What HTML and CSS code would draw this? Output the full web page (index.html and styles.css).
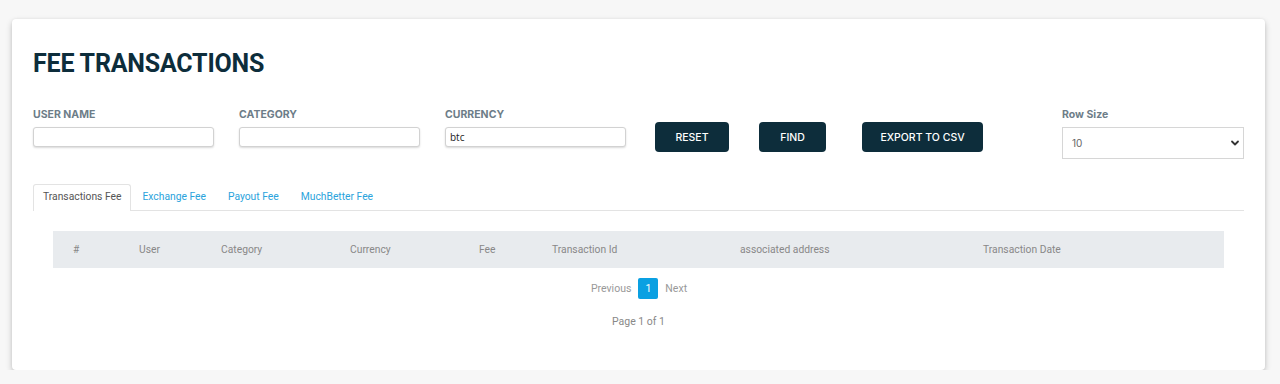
FILE: index.html
```html
<!DOCTYPE html>
<html lang="en">
<head>
    <meta charset="UTF-8">
    <meta name="viewport" content="width=device-width, initial-scale=1.0">
    <title>Fee Transactions</title>
    <link rel="stylesheet" href="styles.css">
</head>
<body>
    <div class="card">
        <h1 class="title">FEE TRANSACTIONS</h1>

        <div class="filters">
            <div class="field">
                <label for="userName">USER NAME</label>
                <input type="text" id="userName">
            </div>
            <div class="field">
                <label for="category">CATEGORY</label>
                <input type="text" id="category">
            </div>
            <div class="field">
                <label for="currency">CURRENCY</label>
                <input type="text" id="currency" value="btc">
            </div>
            <div class="actions">
                <button class="btn btn-reset">RESET</button>
                <button class="btn btn-find">FIND</button>
                <button class="btn btn-export">EXPORT TO CSV</button>
            </div>
            <div class="field row-size">
                <label for="rowSize">Row Size</label>
                <div class="select-wrap">
                    <select id="rowSize">
                        <option>10</option>
                        <option>25</option>
                        <option>50</option>
                    </select>
                    <svg class="chevron" width="10" height="10" viewBox="0 0 10 10">
                        <path d="M2 3.5 L5 6.5 L8 3.5" fill="none" stroke="#333" stroke-width="1.8" stroke-linecap="round" stroke-linejoin="round"/>
                    </svg>
                </div>
            </div>
        </div>

        <ul class="tabs">
            <li class="tab active">Transactions Fee</li>
            <li class="tab">Exchange Fee</li>
            <li class="tab">Payout Fee</li>
            <li class="tab">MuchBetter Fee</li>
        </ul>

        <div class="table-wrap">
            <table class="fee-table">
                <colgroup>
                    <col style="width: 66px">
                    <col style="width: 82px">
                    <col style="width: 129px">
                    <col style="width: 129px">
                    <col style="width: 73px">
                    <col style="width: 188px">
                    <col style="width: 243px">
                    <col>
                </colgroup>
                <thead>
                    <tr>
                        <th>#</th>
                        <th>User</th>
                        <th>Category</th>
                        <th>Currency</th>
                        <th>Fee</th>
                        <th>Transaction Id</th>
                        <th>associated address</th>
                        <th>Transaction Date</th>
                    </tr>
                </thead>
                <tbody></tbody>
            </table>

            <div class="pagination">
                <span class="page-link">Previous</span>
                <span class="page-num">1</span>
                <span class="page-link">Next</span>
            </div>
            <div class="page-info">Page 1 of 1</div>
        </div>
    </div>
</body>
</html>
```

FILE: styles.css
```css
body {
    margin: 0;
    background: #f7f7f7;
    font-family: Roboto, "Liberation Sans", sans-serif;
}
.card {
    margin: 19px 15px 0 12px;
    height: 351px;
    box-sizing: border-box;
    padding: 30px 21px 0 21px;
    background: #fff;
    border-radius: 4px;
    box-shadow: 0 3px 6px rgba(0, 0, 0, 0.22), 0 0 3px rgba(0, 0, 0, 0.06);
}
.title {
    margin: 0;
    font-size: 25px;
    line-height: 30px;
    font-weight: 700;
    color: #0d2d3b;
    letter-spacing: -0.2px;
}
.filters {
    display: flex;
    align-items: flex-start;
    margin-top: 29px;
}
.field {
    display: flex;
    flex-direction: column;
    width: 181px;
    margin-right: 25px;
}
.field label {
    font-family: Inter, "Open Sans", sans-serif;
    font-size: 10.5px;
    font-weight: 700;
    line-height: 14px;
    color: #6d7d88;
    margin-bottom: 5px;
}
.field input {
    height: 20px;
    box-sizing: border-box;
    border: 1px solid #d2d2d2;
    border-radius: 3px;
    box-shadow: 0 1px 2px rgba(0, 0, 0, 0.15);
    padding: 0 4px;
    font-family: "Open Sans", sans-serif;
    font-size: 10px;
    color: #222;
    outline: none;
}
.actions {
    display: flex;
    margin-top: 14px;
    margin-left: 4px;
}
.btn {
    height: 30px;
    border: none;
    border-radius: 4px;
    background: #0d2d3b;
    color: #fff;
    font-family: Inter, "Open Sans", sans-serif;
    font-size: 10.5px;
    font-weight: 500;
    padding: 0;
}
.btn-reset {
    width: 74px;
}
.btn-find {
    width: 67px;
    margin-left: 30px;
}
.btn-export {
    width: 121px;
    margin-left: 36px;
}
.row-size {
    margin-left: auto;
    margin-right: 0;
    width: 182px;
}
.select-wrap {
    position: relative;
}
.select-wrap select {
    width: 100%;
    height: 32px;
    appearance: none;
    -webkit-appearance: none;
    border: 1px solid #d6d6d6;
    border-radius: 0;
    background: #fff;
    padding: 0 9px;
    font-family: Inter, "Open Sans", sans-serif;
    font-size: 10px;
    color: #666;
    outline: none;
}
.chevron {
    position: absolute;
    right: 4px;
    top: 11px;
    pointer-events: none;
}
.tabs {
    list-style: none;
    margin: 25px 0 0 0;
    padding: 0;
    display: flex;
    border-bottom: 1px solid #e3e3e3;
    height: 26px;
}
.tab {
    font-size: 10.3px;
    line-height: 24px;
    padding: 0 10px;
    color: #2aa3dc;
    border: 1px solid transparent;
    border-bottom: none;
    border-radius: 3px 3px 0 0;
}
.tab.active {
    color: #555;
    border-color: #e3e3e3;
    background: #fff;
    height: 26px;
    padding: 0 9px;
}
.table-wrap {
    padding: 0 20px;
}
.fee-table {
    width: 100%;
    margin-top: 20px;
    border-collapse: collapse;
    table-layout: fixed;
}
.fee-table th {
    background: #e8ebee;
    height: 37px;
    padding: 0 0 0 20px;
    text-align: left;
    font-size: 10.3px;
    font-weight: 400;
    color: #888;
}
.pagination {
    display: flex;
    justify-content: center;
    align-items: center;
    gap: 7px;
    margin-top: 10px;
    margin-left: 1px;
}
.page-link {
    font-size: 10.5px;
    color: #999;
}
.page-num {
    width: 20px;
    height: 21px;
    line-height: 21px;
    text-align: center;
    background: #0aa0e2;
    color: #fff;
    font-size: 10.5px;
    border-radius: 2px;
}
.page-info {
    text-align: center;
    margin-top: 16px;
    font-size: 10.5px;
    color: #888;
}
```
